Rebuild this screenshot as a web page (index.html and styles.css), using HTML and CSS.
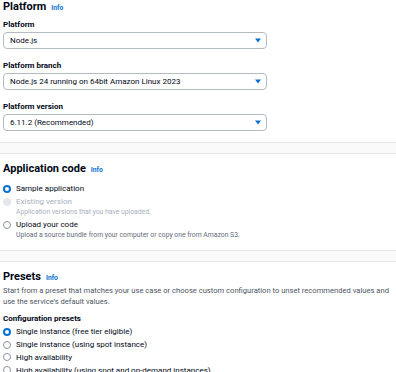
FILE: index.html
```html
<!DOCTYPE html>
<html>
<head>
<meta charset="utf-8">
<link rel="stylesheet" href="styles.css">
</head>
<body>
<div class="page">
  <section class="sec sec-first">
    <h2 class="h2 h2-main">Platform <a class="info">Info</a></h2>
    <div class="field">
      <div class="label">Platform</div>
      <div class="select"><span>Node.js</span><svg class="caret" width="6" height="5" viewBox="0 0 6 5"><path d="M0 0.5h6L3 4.5z" fill="#0972d3"/></svg></div>
    </div>
    <div class="field">
      <div class="label">Platform branch</div>
      <div class="select"><span>Node.js 24 running on 64bit Amazon Linux 2023</span><svg class="caret" width="6" height="5" viewBox="0 0 6 5"><path d="M0 0.5h6L3 4.5z" fill="#0972d3"/></svg></div>
    </div>
    <div class="field">
      <div class="label">Platform version</div>
      <div class="select"><span>6.11.2 (Recommended)</span><svg class="caret" width="6" height="5" viewBox="0 0 6 5"><path d="M0 0.5h6L3 4.5z" fill="#0972d3"/></svg></div>
    </div>
  </section>
  <div class="divider"></div>
  <section class="sec sec-app">
    <h2 class="h2">Application code <a class="info">Info</a></h2>
    <div class="radios">
      <div class="radio checked"><span class="dot"></span><span class="rtext">Sample application</span></div>
      <div class="radio disabled"><span class="dot"></span><span class="rtext">Existing version</span></div>
      <div class="rdesc disabled-desc">Application versions that you have uploaded.</div>
      <div class="radio"><span class="dot"></span><span class="rtext">Upload your code</span></div>
      <div class="rdesc">Upload a source bundle from your computer or copy one from Amazon S3.</div>
    </div>
  </section>
  <div class="divider"></div>
  <section class="sec sec-presets">
    <h2 class="h2">Presets <a class="info">Info</a></h2>
    <p class="desc">Start from a preset that matches your use case or choose custom configuration to unset recommended values and use the service's default values.</p>
    <div class="label cfg">Configuration presets</div>
    <div class="radio checked"><span class="dot"></span><span class="rtext">Single instance (free tier eligible)</span></div>
    <div class="radio"><span class="dot"></span><span class="rtext">Single instance (using spot instance)</span></div>
    <div class="radio"><span class="dot"></span><span class="rtext">High availability</span></div>
    <div class="radio"><span class="dot"></span><span class="rtext">High availability (using spot and on-demand instances)</span></div>
  </section>
</div>
</body>
</html>
```

FILE: styles.css
```css
html, body {
  margin: 0;
  padding: 0;
  background: #ffffff;
}
body {
  font-family: Roboto, "Liberation Sans", sans-serif;
  color: #000716;
  font-size: 8px;
  width: 396px;
  height: 372px;
  overflow: hidden;
}
.page {
  display: flex;
  flex-direction: column;
}
.sec {
  padding: 0 2px 0 3px;
}
.h2 {
  margin: 0;
  font-size: 11px;
  line-height: 14px;
  height: 14px;
  font-weight: 700;
  display: flex;
  align-items: baseline;
  gap: 5px;
}
.h2-main {
  height: 18px;
}
.info {
  color: #0972d3;
  font-size: 6.7px;
  font-weight: 700;
}
.sec-first {
  padding-bottom: 1px;
}
.field {
  display: flex;
  flex-direction: column;
  margin-bottom: 10px;
}
.label {
  font-weight: 700;
  line-height: 13px;
  margin-bottom: 1px;
}
.select {
  box-sizing: border-box;
  width: 264px;
  height: 17px;
  border: 1px solid #b3bac4;
  border-radius: 4px;
  display: flex;
  align-items: center;
  justify-content: space-between;
  padding: 0 5px 0 6px;
  line-height: 15px;
}
.caret {
  display: block;
}
.divider {
  height: 10px;
  background: #fafafa;
  border-top: 1px solid #e6e7e9;
  border-bottom: 1px solid #e6e7e9;
}
.sec-app {
  padding-top: 8px;
  padding-bottom: 9px;
}
.sec-app .h2 {
  margin-bottom: 6px;
}
.radio {
  display: flex;
  align-items: center;
  gap: 5px;
  height: 13px;
  line-height: 13px;
}
.dot {
  box-sizing: border-box;
  width: 8px;
  height: 8px;
  border-radius: 50%;
  border: 1px solid #8a95a3;
  background: #fff;
  flex: none;
}
.checked .dot {
  border: 2.5px solid #0972d3;
}
.disabled .dot {
  border-color: #e3e6ea;
  background: #e3e6ea;
}
.disabled .rtext {
  color: #a7b1be;
}
.rdesc {
  font-size: 6.8px;
  line-height: 10px;
  color: #5f6b7a;
  padding-left: 13px;
  margin-top: -1.5px;
  margin-bottom: 1.5px;
}
.disabled-desc {
  color: #a7b1be;
}
.sec-presets {
  padding-top: 8px;
  padding-right: 0;
}
.desc {
  margin: 0.5px 0 5px;
  font-size: 7.6px;
  line-height: 11px;
  color: #4b5563;
}
.cfg {
  height: 14px;
  line-height: 14px;
  margin-bottom: 0;
}
.sec-presets .radio {
  height: 12.8px;
}
```
